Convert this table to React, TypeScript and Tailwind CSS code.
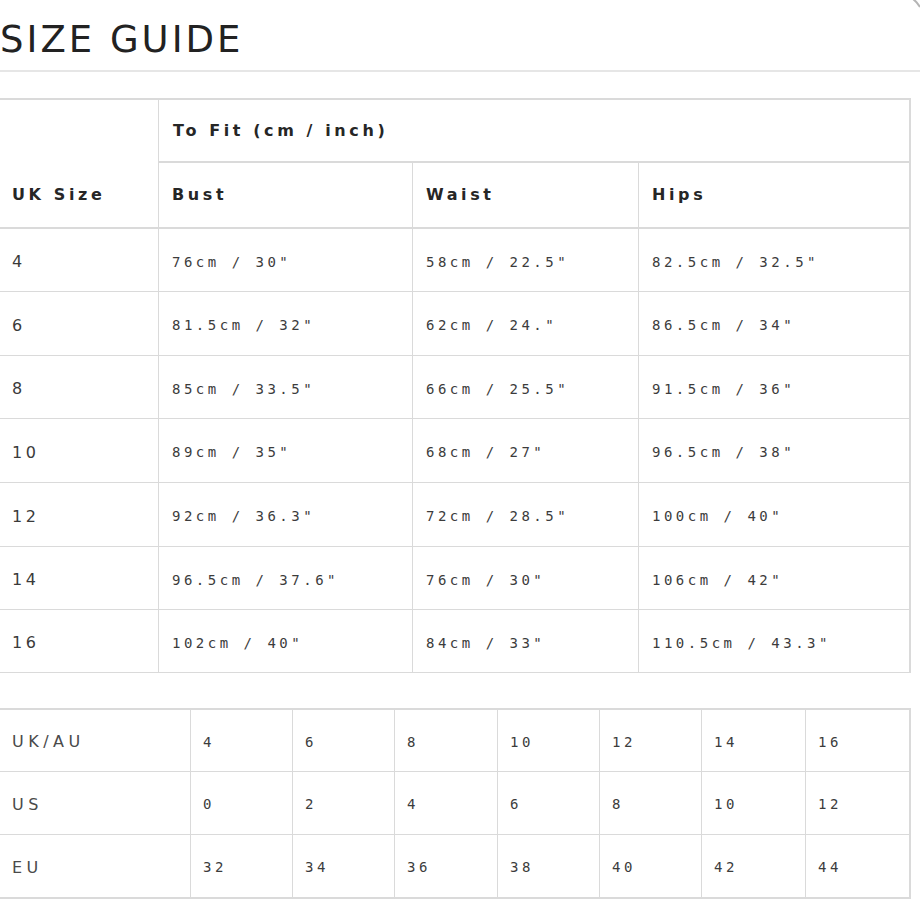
// Size guide table — two grids: measurements (to fit) and size conversion
const MEASUREMENTS: Array<{ uk: string; bust: string; waist: string; hips: string }> = [
  { uk: "4", bust: '76cm / 30"', waist: '58cm / 22.5"', hips: '82.5cm / 32.5"' },
  { uk: "6", bust: '81.5cm / 32"', waist: '62cm / 24."', hips: '86.5cm / 34"' },
  { uk: "8", bust: '85cm / 33.5"', waist: '66cm / 25.5"', hips: '91.5cm / 36"' },
  { uk: "10", bust: '89cm / 35"', waist: '68cm / 27"', hips: '96.5cm / 38"' },
  { uk: "12", bust: '92cm / 36.3"', waist: '72cm / 28.5"', hips: '100cm / 40"' },
  { uk: "14", bust: '96.5cm / 37.6"', waist: '76cm / 30"', hips: '106cm / 42"' },
  { uk: "16", bust: '102cm / 40"', waist: '84cm / 33"', hips: '110.5cm / 43.3"' },
];

const CONVERSION: Array<{ label: string; values: string[] }> = [
  { label: "UK/AU", values: ["4", "6", "8", "10", "12", "14", "16"] },
  { label: "US", values: ["0", "2", "4", "6", "8", "10", "12"] },
  { label: "EU", values: ["32", "34", "36", "38", "40", "42", "44"] },
];

const head = "font-['DejaVu_Sans',sans-serif] font-bold text-[16px] tracking-[3.6px] text-[#262626]";
const mono = "font-['DejaVu_Sans_Mono',monospace] text-[14px] tracking-[3.5px] text-[#3c3c3c]";
const sans = "font-['DejaVu_Sans',sans-serif] text-[16px] tracking-[3.5px] text-[#3a3a3a]";

export default function App() {
  return (
    <div className="relative w-[920px] h-[920px] bg-white overflow-hidden">
      {/* góc bo của khung modal */}
      <svg className="absolute top-0 right-0" width="10" height="10" viewBox="0 0 10 10">
        <path d="M3 -1 Q7 2 10 7" stroke="#b5b5b5" strokeWidth="2" fill="none" />
      </svg>

      <h1 className="pt-[21px] font-['DejaVu_Sans',sans-serif] text-[37px] leading-none tracking-[3px] text-[#222]">
        SIZE GUIDE
      </h1>
      <div className="mt-[12px] h-[2px] w-[920px] bg-[#e6e6e6]" />

      {/* Bảng số đo */}
      <div className="mt-[26px] w-[911px] border-t-2 border-r-2 border-[#dadada] grid grid-cols-[158px_254px_226px_271px] grid-rows-[63px_66px_63px_64px_63px_64px_64px_63px_63px]">
        <div className="row-span-2 border-b-2 border-[#dadada] flex flex-col justify-end">
          <div className={`h-[64px] flex items-center pl-3 ${head}`}>UK Size</div>
        </div>
        <div className={`col-span-3 border-l border-b-2 border-[#dadada] flex items-center pl-[14px] ${head}`}>
          To Fit (cm / inch)
        </div>
        {["Bust", "Waist", "Hips"].map(h => (
          <div key={h} className={`border-l border-b-2 border-[#dadada] flex items-center pl-[13px] ${head}`}>{h}</div>
        ))}
        {MEASUREMENTS.map(r => (
          <div key={r.uk} className="contents">
            <div className={`border-b border-[#dadada] flex items-center pl-3 pt-[4px] ${sans}`}>{r.uk}</div>
            <div className={`border-l border-b border-[#dadada] flex items-center pl-[13px] pt-[4px] ${mono}`}>{r.bust}</div>
            <div className={`border-l border-b border-[#dadada] flex items-center pl-[13px] pt-[4px] ${mono}`}>{r.waist}</div>
            <div className={`border-l border-b border-[#dadada] flex items-center pl-[13px] pt-[4px] ${mono}`}>{r.hips}</div>
          </div>
        ))}
      </div>

      {/* Bảng quy đổi size */}
      <div className="mt-[35px] w-[911px] border-t-2 border-r-2 border-[#dadada] grid grid-cols-[190px_102px_102px_103px_102px_102px_104px_104px] grid-rows-[62px_63px_64px]">
        {CONVERSION.map((r, i) => (
          <div key={r.label} className="contents">
            <div className={`${i === CONVERSION.length - 1 ? "border-b-2" : "border-b"} border-[#dadada] flex items-center pl-3 pt-[3px] font-['DejaVu_Sans',sans-serif] text-[16px] tracking-[4.5px] text-[#4a4a4a]`}>
              {r.label}
            </div>
            {r.values.map((v, j) => (
              <div key={j} className={`border-l ${i === CONVERSION.length - 1 ? "border-b-2" : "border-b"} border-[#dadada] flex items-center pl-3 pt-[3px] ${mono}`}>
                {v}
              </div>
            ))}
          </div>
        ))}
      </div>
    </div>
  );
}
